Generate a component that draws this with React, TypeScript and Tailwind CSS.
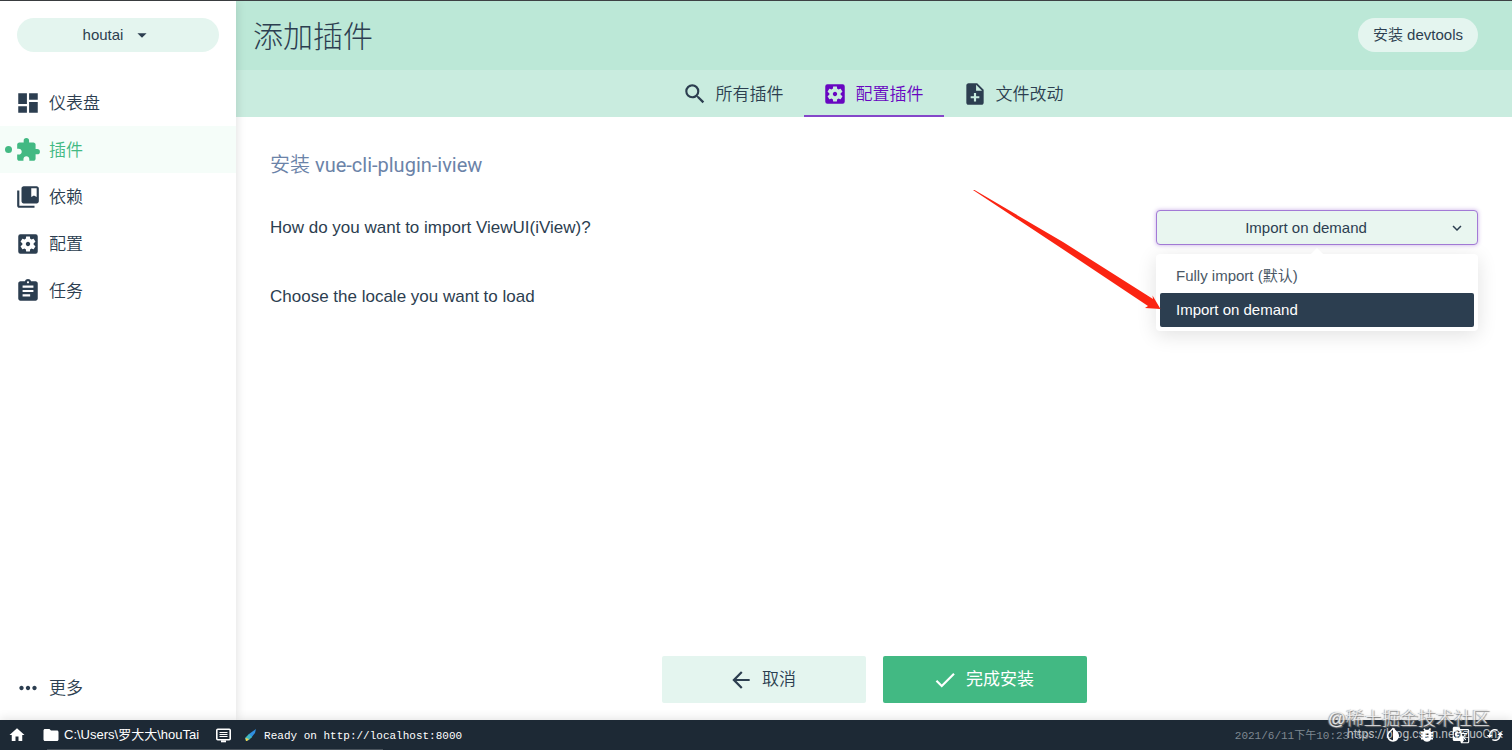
import { useState } from 'react'
import type { IconType } from 'react-icons'
import {
  MdArrowBack,
  MdArrowDropDown,
  MdAssignment,
  MdBugReport,
  MdCached,
  MdCollectionsBookmark,
  MdDashboard,
  MdDone,
  MdExtension,
  MdFolder,
  MdGTranslate,
  MdHome,
  MdInvertColors,
  MdKeyboardArrowDown,
  MdMoreHoriz,
  MdNoteAdd,
  MdSearch,
  MdSettingsApplications,
} from 'react-icons/md'

type Item = { label: string; icon: IconType }

const navItems: Item[] = [
  { label: '仪表盘', icon: MdDashboard },
  { label: '插件', icon: MdExtension },
  { label: '依赖', icon: MdCollectionsBookmark },
  { label: '配置', icon: MdSettingsApplications },
  { label: '任务', icon: MdAssignment },
]

const tabs: Item[] = [
  { label: '所有插件', icon: MdSearch },
  { label: '配置插件', icon: MdSettingsApplications },
  { label: '文件改动', icon: MdNoteAdd },
]

const importModes = [
  { value: 'full', label: 'Fully import (默认)' },
  { value: 'partial', label: 'Import on demand' },
]

const statusActions: Item[] = [
  { label: '切换主题', icon: MdInvertColors },
  { label: '报告问题', icon: MdBugReport },
  { label: '翻译', icon: MdGTranslate },
  { label: '重置', icon: MdCached },
]

const NavLink = ({ item, active }: { item: Item; active?: boolean }) => {
  const Icon = item.icon
  return (
    <a
      href="#"
      className={`relative flex h-[47px] items-center gap-2 pl-[15px] text-[17px] ${active ? 'bg-[#f5fdf9] text-[#42b983]' : 'text-[#2c3e50]'}`}
    >
      {active && <span className="absolute left-[5px] size-[7px] rounded-full bg-[#42b983]" />}
      <Icon className="size-[26px]" />
      <span className="pt-0.5 font-[350]">{item.label}</span>
    </a>
  )
}

const Sidebar = () => (
  <nav className="relative z-10 flex w-[236px] shrink-0 flex-col bg-white shadow-[0_0_10px_rgba(0,0,0,0.14)]">
    <div className="px-[17px] pt-[17px] pb-[27px]">
      <button className="flex h-[34px] w-full items-center justify-center gap-2 rounded-full bg-[#e4f5ef] text-[15px] text-[#2c3e50]">
        houtai
        <MdArrowDropDown className="size-[22px]" />
      </button>
    </div>
    {navItems.map(item => (
      <NavLink key={item.label} item={item} active={item.label === '插件'} />
    ))}
    <div className="mt-auto pb-[9px]">
      <NavLink item={{ label: '更多', icon: MdMoreHoriz }} />
    </div>
  </nav>
)

const Tabs = () => {
  const [current, setCurrent] = useState('配置插件')
  return (
    <div role="tablist" className="flex h-[47px] justify-center bg-[#c9ecdf]">
      {tabs.map(({ label, icon: Icon }) => (
        <button
          key={label}
          role="tab"
          aria-selected={current === label}
          onClick={() => setCurrent(label)}
          className={`flex w-[140px] items-center justify-center gap-2 border-y-2 border-t-transparent pr-[3px] text-[17px] ${current === label ? 'border-b-[#8447c9] text-[#6806c1]' : 'border-b-transparent text-[#2c3e50]'}`}
        >
          <Icon className="size-[26px]" />
          <span className="pt-0.5 font-[350]">{label}</span>
        </button>
      ))}
    </div>
  )
}

const ImportSelect = () => {
  const [mode, setMode] = useState('partial')
  return (
    <div className="relative w-[322px] text-[15px] text-[#2c3e50]">
      <select
        id="import-mode"
        value={mode}
        onChange={e => setMode(e.target.value)}
        className="h-[35px] w-full appearance-none rounded border border-[#a37ad6] bg-[#e9f6f0] pt-0.5 pr-[22px] [text-align-last:center] shadow-[0_0_4px_rgba(132,71,201,0.45)] outline-none"
      >
        {importModes.map(({ value, label }) => (
          <option key={value} value={value}>{label}</option>
        ))}
      </select>
      <MdKeyboardArrowDown className="pointer-events-none absolute top-[9px] right-3 size-[18px]" />
      <div className="absolute inset-x-0 top-[44px] rounded-sm bg-white p-1 pt-[5px] shadow-[0_4px_20px_rgba(0,0,0,0.12)]">
        <span className="absolute -top-1 left-1/2 size-2.5 -translate-x-1/2 rotate-45 bg-white" />
        {importModes.map(({ value, label }) => (
          <button
            key={value}
            onClick={() => setMode(value)}
            className={`relative block h-[34px] w-full rounded-xs px-4 text-left ${mode === value ? 'bg-[#2c3e50] text-white' : 'text-[#4a5866]'}`}
          >
            {label}
          </button>
        ))}
      </div>
    </div>
  )
}

const Arrow = () => (
  <svg viewBox="0 0 188 120" className="pointer-events-none absolute top-[73px] right-[351px] z-20 w-[188px]" fill="#fb2412" aria-hidden="true">
    <path d="M0 0 L1.5 0 L90 52 L180 109 L179.5 105.5 L187.5 119 L172 118 L175 116 L88 58 Z" />
  </svg>
)

const LogIcon = () => (
  <svg viewBox="0 0 17 17" className="h-[17px] w-[17px]" fill="none" stroke="currentColor" aria-hidden="true">
    <rect x="1.8" y="2.3" width="13.4" height="10.4" rx="1" strokeWidth="1.6" />
    <path d="M4.5 5.5 H12.5 M4.5 7.5 H12.5 M4.5 9.5 H12.5" strokeWidth="1.1" />
    <path d="M6 14.3 H11" strokeWidth="2" />
  </svg>
)

const StatusBar = () => (
  <footer className="relative z-20 flex h-[30px] items-center bg-[#1d2935] text-[13px] text-white shadow-[0_-2px_10px_rgba(0,0,0,0.1)]">
    <a href="#" aria-label="主页" className="px-2">
      <MdHome className="size-[18px]" />
    </a>
    <span className="flex items-center gap-1 pr-4 pl-2">
      <MdFolder className="size-[18px]" />
      C:\Users\罗大大\houTai
    </span>
    <LogIcon />
    <svg viewBox="0 0 14 14" className="ml-3 size-3.5" aria-hidden="true">
      <path d="M12 1 L5 6 L3 10 L7 10 L11 5 Z" fill="#2f8fe0" />
      <path d="M5 6 L1 10 L2 13 L5 12 L8 9 Z" fill="#3fb6c0" />
      <path d="M1.5 10 L5 11 L3 13 L2 13 Z" fill="#f3d34a" />
    </svg>
    <span className="ml-1.5 pt-0.5 font-['Liberation_Mono',monospace] text-[11px]">Ready on http://localhost:8000</span>
    <time className="ml-auto pt-0.5 font-['Liberation_Mono','Noto_Sans_CJK_SC',monospace] text-[11px] text-[#7f8891]">
      2021/6/11下午10:23:50
    </time>
    <div className="flex pl-[7px]">
      {statusActions.map(({ label, icon: Icon }) => (
        <button key={label} aria-label={label} className="flex w-[34px] justify-center">
          <Icon className="size-[18px]" />
        </button>
      ))}
    </div>
    <span className="absolute bottom-0 left-[47px] h-px w-[336px] bg-[#4b545d]" />
    <span className="pointer-events-none absolute -top-[15px] right-[22px] text-lg font-light text-white/80 [text-shadow:1px_1px_1px_#777,-1px_0_1px_#999]">
      @稀土掘金技术社区
    </span>
    <span className="pointer-events-none absolute top-[6px] right-[9px] font-[Roboto,sans-serif] text-xs text-white/70">
      https://blog.csdn.net/zuoCnx
    </span>
  </footer>
)

const App = () => (
  <div className="flex min-h-screen flex-col border-t border-[#3d4144] bg-white font-['Liberation_Sans','Noto_Sans_CJK_SC',sans-serif] text-[#2c3e50]">
    <div className="flex flex-1">
      <Sidebar />
      <div className="flex min-w-0 flex-1 flex-col">
        <header className="flex h-[69px] items-center justify-between bg-[#bce8d7] pr-[34px] pl-[17px]">
          <h1 className="pt-0.5 text-3xl font-light">添加插件</h1>
          <button className="mb-px h-[34px] rounded-full bg-[#e4f5ef] px-[15px] text-[15px]">
            <span className="font-[350]">安装</span> devtools
          </button>
        </header>
        <Tabs />
        <main className="relative flex flex-1 flex-col px-[34px] pt-8 pb-[17px]">
          <h2 className="font-['Roboto','Noto_Sans_CJK_SC',sans-serif] text-xl leading-8 text-[#6b83a8]">
            <span className="font-[350]">安装</span> vue-cli-plugin-iview
          </h2>
          <div className="mt-[29px] flex items-center justify-between">
            <label htmlFor="import-mode" className="text-[17px]">How do you want to import ViewUI(iView)?</label>
            <ImportSelect />
          </div>
          <p className="mt-[39px] text-[17px]">Choose the locale you want to load</p>
          <div className="mt-auto flex justify-center gap-[17px] text-[17px]">
            <button className="flex h-[47px] w-[204px] items-center justify-center gap-2 rounded-xs bg-[#e4f5ef] pr-[3px]">
              <MdArrowBack className="size-[26px]" />
              <span className="pt-px font-[350]">取消</span>
            </button>
            <button className="flex h-[47px] w-[204px] items-center justify-center gap-2 rounded-xs bg-[#42b983] pr-[3px] text-white">
              <MdDone className="size-[26px]" />
              <span className="pt-px">完成安装</span>
            </button>
          </div>
          <Arrow />
        </main>
      </div>
    </div>
    <StatusBar />
  </div>
)

export default App
